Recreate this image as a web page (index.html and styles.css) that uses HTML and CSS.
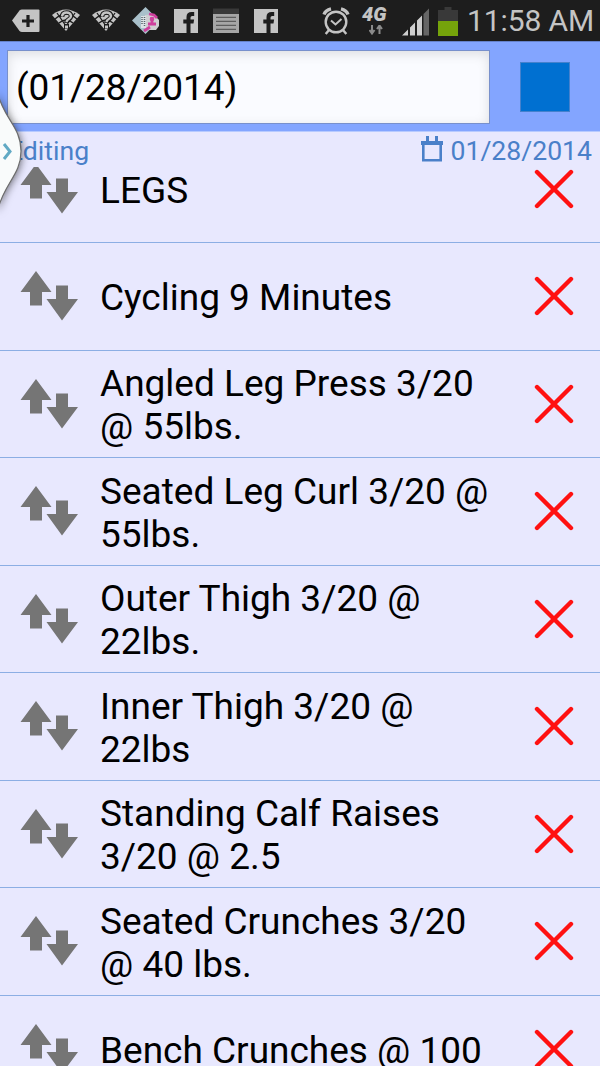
FILE: index.html
```html
<!DOCTYPE html>
<html lang="en">
	<head>
		<meta charset="UTF-8" />
		<meta name="viewport" content="width=device-width, initial-scale=1.0" />
		<title>Workout List</title>
		<link rel="stylesheet" href="styles.css">
	</head>
	<body>
		<svg width="0" height="0" class="symbols">
			<symbol id="wifi" viewBox="0 0 28 41">
				<path d="M0 15Q14 4 28 15L14 31Z" fill="#c4c4c4" />
				<path d="M3 19Q14 9 25 19M7 23Q14 17 21 23M5 13l11 16M23 13L12 29" fill="none" stroke="#1d1d1d" stroke-width="1.3" />
				<path d="M10 17q0-4.500 4.500-4.500t4.500 3.500q0 2-2.500 3.500-2 1-2 3.500" fill="none" stroke="#1d1d1d" stroke-width="4.500" />
				<path d="M10 16.500q.500-4 4.500-4t4.500 3.500q0 2-2.500 3.300-2 1-2 3" fill="none" stroke="#c4c4c4" stroke-width="2.400" />
				<path d="M12 24h5v5h-5z" fill="#1d1d1d" />
				<path d="M13 25.500h3v3h-3z" fill="#c4c4c4" />
			</symbol>
			<symbol id="facebook" viewBox="0 0 28 41">
				<path d="M2 9h24v24H2z" fill="#c4c4c4" />
				<path d="M14.500 33V23.500h-3.200v-4h3.200V17q0-5 5.200-5h2.500v4h-2q-1.700 0-1.700 1.700v1.800h3.600l-.600 4h-3V33z" fill="#1d1d1d" />
			</symbol>
			<symbol id="arrows" viewBox="0 0 60 52">
				<path d="M16 1l15.500 21H22v13.500H10V22H.500z" />
				<path d="M36 15.500h12V29h10L42 50.500 26.500 29H36z" />
			</symbol>
			<symbol id="cross" viewBox="0 0 40 40">
				<path d="M3 3l34 34M37 3L3 37" fill="none" stroke="#ff1111" stroke-width="4.400" stroke-linecap="round" />
			</symbol>
		</svg>

		<div class="status-bar">
			<svg class="status-icon" viewBox="0 0 28 41">
				<path d="M0 20.500L7.500 10.500Q8.500 9.500 10 9.500H26.500Q27.500 9.500 27.500 10.500V31Q27.500 32 26.500 32H10Q8.500 32 7.500 31Z" fill="#c4c4c4" />
				<path d="M16 15v12M10 21h12" stroke="#1d1d1d" stroke-width="3.200" />
			</svg>
			<svg class="status-icon"><use href="#wifi" /></svg>
			<svg class="status-icon"><use href="#wifi" /></svg>
			<svg class="status-icon" viewBox="0 0 28 41">
				<path d="M0 20.500L13.500 7 27 20.500 13.500 34z" fill="#a9c0ca" />
				<path d="M13 15l8-1 6 6v6l-3 4H13z" fill="#cfcfd2" />
				<path d="M9 16h5v12H9z" fill="#dce3e6" />
				<path d="M10 17v8M12.500 17v10" stroke="#59636a" stroke-width="1.500" stroke-dasharray="1 1" />
				<path d="M16 24h8M20 17v7M17 14l5 1 3 3M12 31l3-2 3-2" fill="none" stroke="#cf3f9d" stroke-width="2.800" />
				<circle cx="20" cy="19" r="2.300" fill="#cf3f9d" />
			</svg>
			<svg class="status-icon"><use href="#facebook" /></svg>
			<svg class="status-icon" viewBox="0 0 28 41">
				<path d="M1 8.500h26V14H1z" fill="#393939" />
				<path d="M1 14h26v19H1z" fill="#a6a6a6" />
				<path d="M4 17.300h20M4 21.300h20M4 25.300h20M4 29.300h20" stroke="#5d5d5d" stroke-width="1.300" />
			</svg>
			<svg class="status-icon"><use href="#facebook" /></svg>

			<svg class="status-icon alarm" viewBox="0 0 28 41">
				<g fill="none" stroke="#c4c4c4">
					<circle cx="14" cy="22" r="10.300" stroke-width="2.400" />
					<path d="M9 20.500l4.500 4 6-5.500" stroke-width="2" />
					<path d="M2 14.500Q3.500 10 9 8.800M26 14.500Q24.500 10 19 8.800" stroke-width="3.400" />
					<path d="M7 30l-3.300 4M21 30l3.300 4" stroke-width="2.400" />
				</g>
			</svg>
			<div class="network">
				<span class="network-type">4G</span>
				<svg class="network-data" viewBox="0 0 14 10">
					<path d="M3 0v7M.500 5L3 8.500 5.500 5M10.500 9V2M8 4l2.500-3.500L13 4" fill="none" stroke="#8b8b8b" stroke-width="2" />
				</svg>
			</div>
			<svg class="status-icon signal" viewBox="0 0 28 41">
				<path d="M0 35.500L6 29.500V35.500zM8 27.500l5-5v13H8zM15 20.500l5-5v20h-5z" fill="#cecece" />
				<path d="M21.500 14l5.500-5.500v27h-5.500z" fill="#666" />
			</svg>
			<svg class="battery" viewBox="0 0 20 41">
				<path d="M0 10h6.500V7h7v3H20v11H0z" fill="#393939" />
				<path d="M0 21h20v15H0z" fill="#75a30b" />
			</svg>
			<span class="clock">11:58 AM</span>
		</div>

		<div class="toolbar">
			<input class="title-input" type="text" value="(01/28/2014)" />
			<div class="color-button"></div>
		</div>

		<div class="info-bar">
			<span class="mode">Editing</span>
			<svg class="calendar" viewBox="0 0 22 26">
				<path d="M0 5h22v4H0zM5 0h3v6H5zM14 0h3v6h-3z" fill="#4a80c9" />
				<path d="M2.300 8v16.300h17.400V8" fill="none" stroke="#4a80c9" stroke-width="2.600" />
			</svg>
			<span class="date">01/28/2014</span>
		</div>

		<div class="list">
			<div class="item item-first">
				<svg class="move"><use href="#arrows" /></svg>
				<div class="name">LEGS</div>
				<svg class="remove"><use href="#cross" /></svg>
			</div>
			<div class="item">
				<svg class="move"><use href="#arrows" /></svg>
				<div class="name">Cycling 9 Minutes</div>
				<svg class="remove"><use href="#cross" /></svg>
			</div>
			<div class="item">
				<svg class="move"><use href="#arrows" /></svg>
				<div class="name">Angled Leg Press 3/20<br />@ 55lbs.</div>
				<svg class="remove"><use href="#cross" /></svg>
			</div>
			<div class="item">
				<svg class="move"><use href="#arrows" /></svg>
				<div class="name">Seated Leg Curl 3/20 @<br />55lbs.</div>
				<svg class="remove"><use href="#cross" /></svg>
			</div>
			<div class="item">
				<svg class="move"><use href="#arrows" /></svg>
				<div class="name">Outer Thigh 3/20 @<br />22lbs.</div>
				<svg class="remove"><use href="#cross" /></svg>
			</div>
			<div class="item">
				<svg class="move"><use href="#arrows" /></svg>
				<div class="name">Inner Thigh 3/20 @<br />22lbs</div>
				<svg class="remove"><use href="#cross" /></svg>
			</div>
			<div class="item">
				<svg class="move"><use href="#arrows" /></svg>
				<div class="name">Standing Calf Raises<br />3/20 @ 2.5</div>
				<svg class="remove"><use href="#cross" /></svg>
			</div>
			<div class="item">
				<svg class="move"><use href="#arrows" /></svg>
				<div class="name">Seated Crunches 3/20<br />@ 40 lbs.</div>
				<svg class="remove"><use href="#cross" /></svg>
			</div>
			<div class="item item-last">
				<svg class="move"><use href="#arrows" /></svg>
				<div class="name">Bench Crunches @ 100</div>
				<svg class="remove"><use href="#cross" /></svg>
			</div>
		</div>

		<!-- pull-out handle on the left edge -->
		<svg class="drawer" viewBox="0 0 32 120">
			<path d="M-2 3C4 28 21 36 21 60S5 91-2 118z" fill="#f9fbfb" stroke="#6c6c6c" stroke-width="1.200" />
			<path d="M4 53L10 60.500 4 68" fill="none" stroke="#61a9c4" stroke-width="3" />
		</svg>
	</body>
</html>
```
FILE: styles.css
```css
* {
	box-sizing: border-box;
}

body {
	display: flex;
	flex-direction: column;
	position: relative;
	height: 100vh;
	margin: 0;
	background: #e8e8fe;
	font-family: Roboto, sans-serif;
	color: #000;
	overflow: hidden;
}

svg {
	display: block;
	flex: none;
}

.symbols {
	position: absolute;
}

.status-bar {
	display: flex;
	flex: none;
	height: 41px;
	padding-left: 12px;
	background: #1d1d1d;
	color: #c4c4c4;
}
.status-icon {
	width: 28px;
	height: 41px;
	margin-right: 12px;
}
.alarm {
	margin-left: 30px;
}
.network {
	width: 28px;
	padding-top: 4px;
	margin-right: 12px;
}
.network-type {
	display: block;
	height: 21px;
	line-height: 20px;
	font-size: 20px;
	font-weight: 900;
	font-style: italic;
}
.network-data {
	width: 14px;
	height: 10px;
	margin-left: 7px;
}
.signal {
	margin-right: 8px;
}
.battery {
	width: 20px;
	height: 41px;
}
.clock {
	margin-left: 9px;
	line-height: 41px;
	font-size: 30px;
	letter-spacing: -0.1px;
	white-space: nowrap;
}

.toolbar {
	display: flex;
	flex: none;
	align-items: center;
	height: 91px;
	padding: 0 30px 0 7px;
	background: #83a5ff;
	border-top: 1px solid #6582cb;
	border-bottom: 1px solid #b7caff;
}
.title-input {
	width: 483px;
	height: 74px;
	padding: 2px 8px 0;
	border: 1px solid #7890cc;
	border-radius: 0;
	background: #fafbff;
	box-shadow: inset 0 3px 12px rgba(0, 0, 0, 0.12);
	color: #000;
	font-family: Roboto, sans-serif;
	font-size: 37px;
	letter-spacing: -0.1px;
	outline: none;
}
.color-button {
	width: 50px;
	height: 50px;
	margin-left: auto;
	background: #0070d1;
	border: 1px solid #4581cd;
}

.info-bar {
	display: flex;
	flex: none;
	height: 35px;
	padding: 0 8px;
	line-height: 38px;
	font-size: 26.6px;
	color: #4a80c9;
}
.mode {
	flex: 1;
}
.calendar {
	width: 22px;
	height: 26px;
	margin: 4px 7px 0 0;
}

.list {
	flex: 1;
	min-height: 0;
	overflow: hidden;
}
.item {
	display: flex;
	align-items: center;
	height: 107.5px;
	padding: 0 26px 0 20px;
	border-bottom: 1px solid #8caee4;
}
/* scrolled under the info bar */
.item-first {
	margin-top: -31.5px;
}
/* cut at the bottom of the screen */
.item-last {
	border-bottom: none;
}
.move {
	width: 60px;
	height: 52px;
	fill: #757575;
}
.name {
	flex: 1;
	padding-left: 20px;
	padding-top: 3px;
	font-size: 37px;
	line-height: 43px;
	white-space: nowrap;
}
.remove {
	width: 40px;
	height: 40px;
}

.drawer {
	position: absolute;
	top: 91px;
	left: 0;
	width: 32px;
	height: 120px;
	overflow: visible;
	filter: drop-shadow(0 1px 4px rgba(0, 0, 0, 0.6));
}
```
